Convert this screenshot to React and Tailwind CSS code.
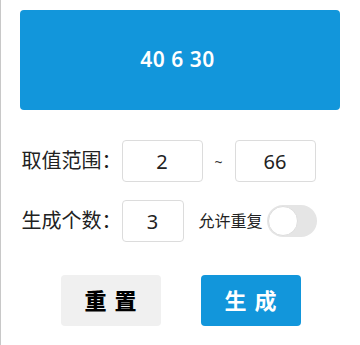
import React, { useState } from 'react';

const App = () => {
  const [min, setMin] = useState('2');
  const [max, setMax] = useState('66');
  const [count, setCount] = useState('3');
  const [repeat, setRepeat] = useState(false);

  const font = { fontFamily: '"Noto Sans", "Noto Sans CJK SC", sans-serif' };

  return (
    <div className="w-[360px] h-[345px] bg-white border-l-[1.5px] border-[#c8c8c8] pt-[10px] pl-[18.5px]" style={font}>
      {/* result */}
      <div className="w-[320px] h-[100px] bg-[#1296db] rounded-[4px] flex items-center justify-center">
        <span className="text-white text-[21px] font-semibold tracking-[0.5px] -ml-[4px]">40 6 30</span>
      </div>

      {/* range */}
      <div className="flex items-center mt-[30px] h-[42px]">
        <span className="shrink-0 whitespace-nowrap text-[20px] text-[#222] w-[102px] pl-[2px]">取值范围：</span>
        <input
          value={min}
          onChange={(e) => setMin(e.target.value)}
          className="w-[81px] h-[42px] border border-[#dcdcdc] rounded-[4px] text-center text-[20px] text-[#222] outline-none"
        />
        <span className="w-[32px] text-center text-[14px] text-[#333]">~</span>
        <input
          value={max}
          onChange={(e) => setMax(e.target.value)}
          className="w-[81px] h-[42px] border border-[#dcdcdc] rounded-[4px] text-center text-[20px] text-[#222] outline-none"
        />
      </div>

      {/* count */}
      <div className="flex items-center mt-[18px] h-[42px]">
        <span className="shrink-0 whitespace-nowrap text-[20px] text-[#222] w-[102px] pl-[2px]">生成个数：</span>
        <input
          value={count}
          onChange={(e) => setCount(e.target.value)}
          className="w-[62px] h-[42px] border border-[#dcdcdc] rounded-[4px] text-center text-[20px] text-[#222] outline-none"
        />
        <span className="ml-[15px] whitespace-nowrap text-[16px] text-[#222]">允许重复</span>
        <button
          onClick={() => setRepeat(!repeat)}
          className={`ml-[4px] w-[50px] h-[32px] rounded-full p-[1px] flex ${repeat ? 'bg-[#1296db] justify-end' : 'bg-[#e5e5e5] justify-start'}`}
        >
          <span className="w-[30px] h-[30px] rounded-full bg-white border border-[#dedede]"></span>
        </button>
      </div>

      {/* actions */}
      <div className="flex justify-center gap-[40px] mt-[33px] -ml-[18.5px]">
        <button className="w-[100px] h-[51px] bg-[#f0f0f0] rounded-[4px] text-[22px] font-black text-black tracking-[8px] pl-[8px]">
          重置
        </button>
        <button className="w-[100px] h-[51px] bg-[#1296db] rounded-[4px] text-[22px] font-bold text-white tracking-[8px] pl-[8px]">
          生成
        </button>
      </div>
    </div>
  );
};

export default App;
